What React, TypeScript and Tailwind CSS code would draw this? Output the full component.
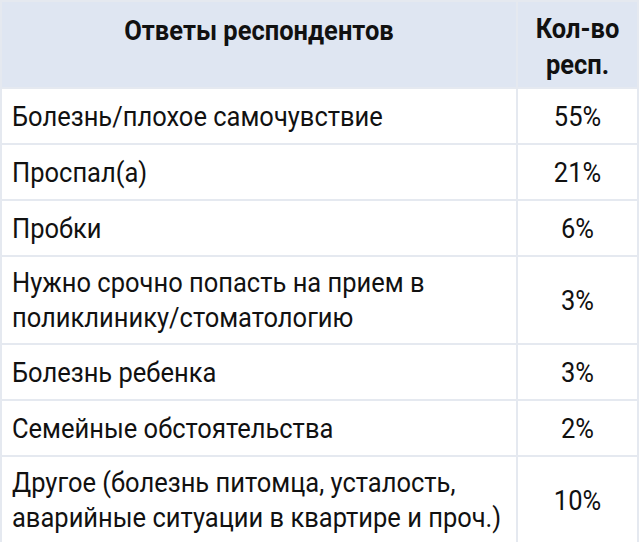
const rows: { label: string[]; value: string }[] = [
  { label: ['Болезнь/плохое самочувствие'], value: '55%' },
  { label: ['Проспал(а)'], value: '21%' },
  { label: ['Пробки'], value: '6%' },
  { label: ['Нужно срочно попасть на прием в', 'поликлинику/стоматологию'], value: '3%' },
  { label: ['Болезнь ребенка'], value: '3%' },
  { label: ['Семейные обстоятельства'], value: '2%' },
  { label: ['Другое (болезнь питомца, усталость,', 'аварийные ситуации в квартире и проч.)'], value: '10%' },
];

export default function App() {
  return (
    <div className="w-[640px] bg-white font-['Roboto',sans-serif] text-[25.5px] leading-[32px] text-[#111]">
      <table className="w-[639px] border-collapse">
        <thead>
          <tr className="bg-[#dfe6f2]">
            <th className="h-[87px] border-2 border-[#e5e9f0] px-2.5 pt-3 align-top font-bold">
              <div className="scale-y-110">Ответы респондентов</div>
            </th>
            <th className="w-[121px] border-2 border-[#e5e9f0] px-2.5 pt-3 align-top font-bold">
              <div className="scale-y-110">
                Кол-во
                <br />
                респ.
              </div>
            </th>
          </tr>
        </thead>
        <tbody>
          {rows.map((row) => (
            <tr key={row.value + row.label[0]}>
              <td
                className={`border-2 border-[#e5e9f0] px-2.5 text-left whitespace-nowrap ${
                  row.label.length > 1 ? 'h-[88px]' : 'h-[56px]'
                }`}
              >
                <div className="scale-y-110">
                  {row.label.map((line, i) => (
                    <div key={i}>{line}</div>
                  ))}
                </div>
              </td>
              <td className="border-2 border-[#e5e9f0] px-2.5 text-center">
                <div className="scale-y-110">{row.value}</div>
              </td>
            </tr>
          ))}
        </tbody>
      </table>
    </div>
  );
}
